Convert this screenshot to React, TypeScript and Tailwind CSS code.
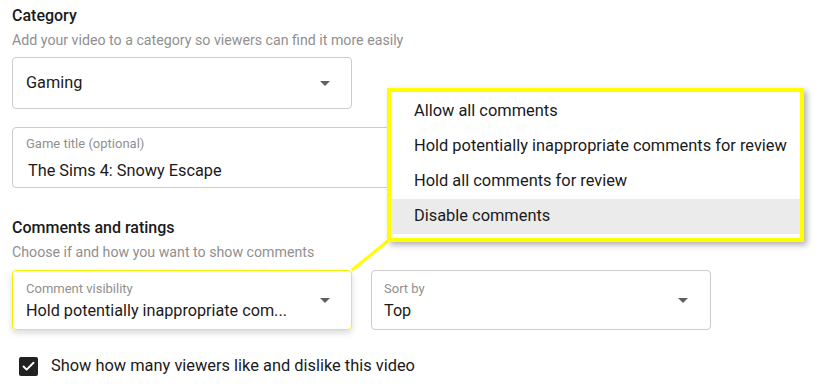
import { Check } from 'lucide-react'

const options = [
  'Allow all comments',
  'Hold potentially inappropriate comments for review',
  'Hold all comments for review',
  'Disable comments',
]

function Caret() {
  return (
    <svg width="10" height="5" viewBox="0 0 10 5" className="shrink-0">
      <path d="M0 0 L10 0 L5 5 Z" fill="#606060" />
    </svg>
  )
}

export default function App() {
  return (
    <div
      className="relative w-[822px] h-[386px] overflow-hidden bg-white px-3 pt-[5px] text-[#1a1a1a]"
      style={{ fontFamily: 'Roboto, "Noto Sans", sans-serif' }}
    >
      <h2 className="text-[16px] leading-[22px] font-medium">Category</h2>
      <p className="mt-1 text-[14.2px] leading-[18px] text-[#909090]">
        Add your video to a category so viewers can find it more easily
      </p>

      <div className="mt-2 flex h-[52px] w-[340px] items-center justify-between rounded border border-[#cccccc] pl-[13px] pr-[21px]">
        <span className="text-[16.3px]">Gaming</span>
        <Caret />
      </div>

      <div className="mt-[18px] h-[61px] w-[699px] rounded border border-[#cccccc] pl-[13px] pt-2">
        <div className="text-[13px] leading-4 text-[#909090]">Game title (optional)</div>
        <div className="mt-2 pl-[2px] text-[16.3px] leading-[22px]">The Sims 4: Snowy Escape</div>
      </div>

      <h2 className="mt-[29px] text-[16px] leading-[22px] font-medium">Comments and ratings</h2>
      <p className="mt-1 text-[14.2px] leading-[18px] text-[#909090]">
        Choose if and how you want to show comments
      </p>

      <div className="mt-[9px] flex gap-[19px]">
        <div className="flex h-[60px] w-[340px] items-center justify-between rounded border-[1.5px] border-[#f5f000] pl-[13px] pr-[21px] shadow-[0_3px_6px_rgba(0,0,0,0.15)]">
          <div className="pt-[2px]">
            <div className="text-[13px] leading-4 text-[#909090]">Comment visibility</div>
            <div className="mt-[3px] text-[16.2px] leading-[22px]">Hold potentially inappropriate com...</div>
          </div>
          <Caret />
        </div>
        <div className="flex h-[60px] w-[340px] items-center justify-between rounded border border-[#cccccc] pl-3 pr-[22px]">
          <div className="pt-[2px]">
            <div className="text-[13px] leading-4 text-[#909090]">Sort by</div>
            <div className="mt-[3px] text-[16.2px] leading-[22px]">Top</div>
          </div>
          <Caret />
        </div>
      </div>

      <label className="mt-[25px] ml-[7px] flex items-center gap-[13px]">
        <span className="flex h-[19px] w-[19px] items-center justify-center rounded-[2px] bg-[#212121]">
          <Check size={15} strokeWidth={3} color="#ffffff" />
        </span>
        <span className="text-[16.4px] leading-[22px]">Show how many viewers like and dislike this video</span>
      </label>

      <svg className="pointer-events-none absolute left-0 top-0" width="822" height="386">
        <line x1="389" y1="240" x2="352" y2="270" stroke="#ffff00" strokeWidth="3" />
      </svg>

      <div className="absolute left-[387px] top-[88px] w-[417px] border-4 border-[#ffff00] bg-white pt-[2px] pb-1 shadow-[3px_3px_6px_rgba(0,0,0,0.3)]">
        {options.map((o, i) => (
          <div
            key={o}
            className={`flex h-[35px] items-center pl-[23px] text-[16.4px] ${i === 3 ? 'bg-[#ebebeb]' : ''}`}
          >
            {o}
          </div>
        ))}
      </div>
    </div>
  )
}
